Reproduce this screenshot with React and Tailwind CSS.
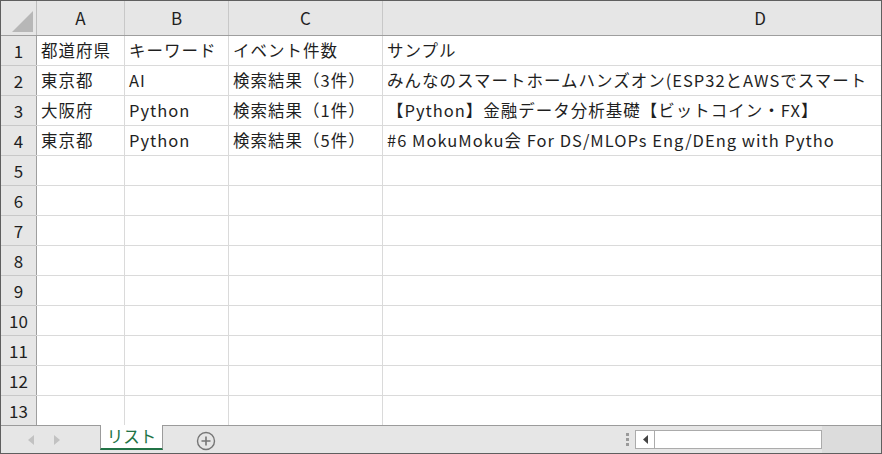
import React from "react";

const COLS = [
  { key: "A", w: "w-[88px]" },
  { key: "B", w: "w-[104px]" },
  { key: "C", w: "w-[154px]" },
];

const ROWS = [
  ["都道府県", "キーワード", "イベント件数", "サンプル"],
  ["東京都", "AI", "検索結果（3件）", "みんなのスマートホームハンズオン(ESP32とAWSでスマート"],
  ["大阪府", "Python", "検索結果（1件）", "【Python】金融データ分析基礎【ビットコイン・FX】"],
  ["東京都", "Python", "検索結果（5件）", "#6 MokuMoku会 For DS/MLOPs Eng/DEng with Pytho"],
];

const App = () => {
  const rows = Array.from({ length: 13 }, (_, i) => ROWS[i] || ["", "", "", ""]);

  return (
    <div className="w-[882px] h-[454px] bg-white border border-[#5f5f5f] flex flex-col overflow-hidden text-[16px] text-[#1f1f1f] font-['Noto_Sans_CJK_JP','Noto_Sans',sans-serif]">
      {/* Column header */}
      <div className="flex h-[35px] shrink-0 bg-[#e6e6e6] border-b border-[#9e9e9e]">
        <div className="w-[36px] shrink-0 border-r border-[#bdbdbd] flex items-end justify-end pr-[2px] pb-[2px]">
          <svg width="22" height="22" viewBox="0 0 22 22">
            <polygon points="21,0 21,21 0,21" fill="#b7b7b7" />
          </svg>
        </div>
        {COLS.map((c) => (
          <div
            key={c.key}
            className={`${c.w} shrink-0 border-r border-[#c8c8c8] flex items-center justify-center text-[17px]`}
          >
            {c.key}
          </div>
        ))}
        <div className="flex-1 overflow-hidden flex items-center">
          <div className="w-[754px] shrink-0 text-center text-[17px]">D</div>
        </div>
      </div>

      {/* Grid */}
      <div className="flex-1 overflow-hidden">
        {rows.map((r, i) => (
          <div key={i} className="flex h-[30px] border-b border-[#dadada]">
            <div className="w-[36px] shrink-0 bg-[#e6e6e6] border-r border-[#9e9e9e] flex items-center justify-center relative text-[17px]">
              {i + 1}
              <div className="absolute left-0 right-0 -bottom-px h-px bg-[#c8c8c8]" />
            </div>
            {COLS.map((c, j) => (
              <div
                key={c.key}
                className={`${c.w} shrink-0 border-r border-[#dadada] flex items-center pl-[4px] whitespace-nowrap overflow-hidden text-[16.5px] tracking-[1px]`}
              >
                {r[j]}
              </div>
            ))}
            <div className="flex-1 flex items-center pl-[4px] whitespace-nowrap overflow-hidden text-[16.5px] tracking-[1px]">
              {r[3]}
            </div>
          </div>
        ))}
      </div>

      {/* Sheet tabs bar */}
      <div className="h-[28px] shrink-0 flex bg-[#e6e6e6] border-t border-[#9b9b9b]">
        <div className="w-[99px] shrink-0 flex items-center pl-[27px] gap-[20px]">
          <svg width="6" height="10" viewBox="0 0 6 10">
            <polygon points="6,0 6,10 0,5" fill="#c2c2c2" />
          </svg>
          <svg width="6" height="10" viewBox="0 0 6 10">
            <polygon points="0,0 0,10 6,5" fill="#c2c2c2" />
          </svg>
        </div>
        <div className="w-[63px] h-[25px] -mt-px shrink-0 bg-white border-x border-[#9b9b9b] border-b-2 border-b-[#217346] flex items-center justify-center text-[#217346] text-[16.5px]">
          リスト
        </div>
        <div className="w-[86px] shrink-0 flex items-center justify-center pt-[2px]">
          <svg width="20" height="20" viewBox="0 0 20 20">
            <circle cx="10" cy="10" r="8.5" fill="none" stroke="#767676" strokeWidth="1.4" />
            <path d="M10 5.5v9M5.5 10h9" stroke="#767676" strokeWidth="1.6" />
          </svg>
        </div>
        <div className="flex-1" />
        <div className="w-[16px] shrink-0 flex flex-col items-center justify-center gap-[2px]">
          <div className="w-[3px] h-[3px] bg-[#9a9a9a]" />
          <div className="w-[3px] h-[3px] bg-[#9a9a9a]" />
          <div className="w-[3px] h-[3px] bg-[#9a9a9a]" />
        </div>
        <div className="w-[187px] shrink-0 flex items-center">
          <div className="w-full h-[19px] bg-white border border-[#ababab] flex">
            <div className="w-[19px] border-r border-[#ababab] flex items-center justify-center">
              <svg width="5" height="9" viewBox="0 0 5 9">
                <polygon points="5,0 5,9 0,4.5" fill="#444" />
              </svg>
            </div>
          </div>
        </div>
        <div className="w-[59px] shrink-0 bg-[#dcdcdc]" />
      </div>
    </div>
  );
};

export default App;
